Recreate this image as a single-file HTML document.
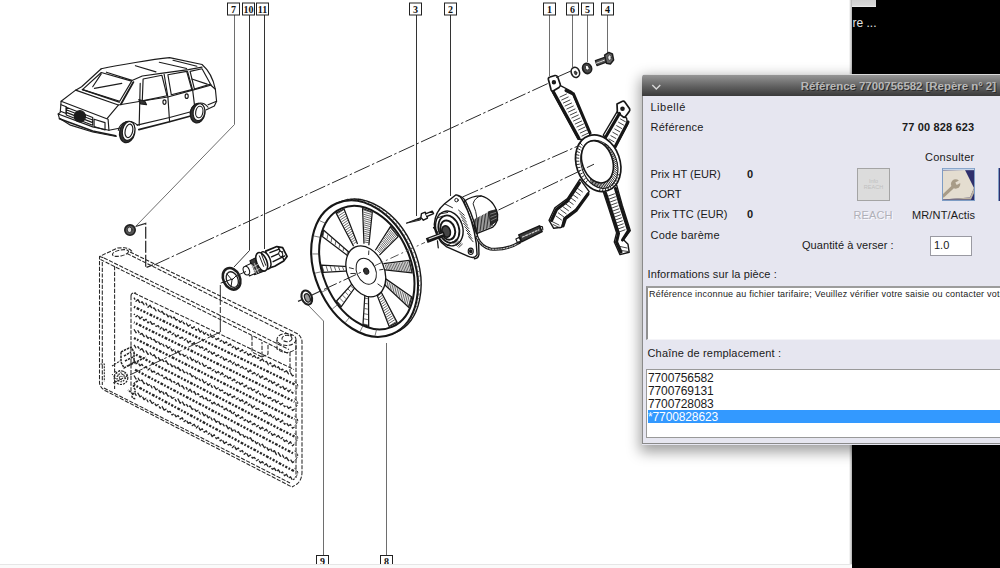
<!DOCTYPE html>
<html lang="fr">
<head>
<meta charset="utf-8">
<title>Référence 7700756582</title>
<style>
html,body{margin:0;padding:0;background:#fff;}
body{width:1000px;height:568px;position:relative;overflow:hidden;font-family:"Liberation Sans",sans-serif;font-size:11px;color:#1a1a1a;}
#draw{position:absolute;left:0;top:0;width:1000px;height:568px;}
#black{position:absolute;left:852px;top:0;width:148px;height:568px;background:#000;}
#black .tab{position:absolute;left:0;top:0;width:23.5px;height:7px;background:linear-gradient(#cfcfcf 0,#d6d6d6 75%,#f0f0f0 100%);}
#edge{position:absolute;left:849px;top:0;width:3px;height:568px;background:linear-gradient(to right,#fff,#b0b0b0);}
#black .re{position:absolute;left:0.5px;top:16px;color:#e4e4e4;font-size:12px;line-height:14px;}
#bottom{position:absolute;left:0;top:564px;width:852px;height:4px;background:#fafafa;border-top:1px solid #e6e6e6;box-sizing:border-box;}
#dlg{position:absolute;left:642px;top:74px;width:370px;height:370.5px;background:#e6e6f0;border-radius:4px 0 0 0;box-shadow:0 5px 14px 2px rgba(0,0,0,0.38);}
#dlg .bd{position:absolute;left:0;top:22px;width:1px;height:348px;background:#8a8a8a;}
#dlg .bb{position:absolute;left:0;top:369px;width:370px;height:1px;background:#8a8a8a;}
#tb{position:absolute;left:0;top:0;width:370px;height:22px;border-radius:4px 0 0 0;background:linear-gradient(#dcdcdc 0,#d4d4d4 1.4px,#939393 1.5px,#626262 55%,#3a3a3a 100%);}
#tb .t{position:absolute;right:16px;top:6px;font-weight:bold;font-size:11.5px;line-height:13px;color:#b8b8b8;text-shadow:1px 1px 0 #2c2c2c;white-space:nowrap;letter-spacing:-0.05px;}
.l{position:absolute;white-space:nowrap;line-height:13px;}
.b{font-weight:bold;}
.box{position:absolute;background:#fff;box-sizing:border-box;}
</style>
</head>
<body>
<svg id="draw" width="1000" height="568" viewBox="0 0 1000 568">
<g id="leaders" fill="none" stroke="#333" stroke-width="1">
<path d="M234.5 15 V124.5 L136 226" stroke="#6e6e6e"/>
<path d="M249.5 15 V250.5 L234 267"/>
<path d="M264.5 15 V249"/>
<path d="M416.5 15 V216"/>
<path d="M450.5 15 V196"/>
<path d="M549.5 15 V76" stroke="#6e6e6e"/>
<path d="M572.5 15 V67" stroke="#6e6e6e"/>
<path d="M587.5 15 V62" stroke="#6e6e6e"/>
<path d="M607.5 15 V53" stroke="#6e6e6e"/>
<path d="M308 305 L323.5 321 V556" stroke="#6e6e6e"/>
<path d="M386.5 343 V556" stroke="#6e6e6e"/>
</g>
<g id="boxes">
<rect x="227.5" y="3" width="12" height="12" fill="#fff" stroke="#222" stroke-width="1"/>
<text x="233.5" y="12.8" text-anchor="middle" font-family="Liberation Serif,serif" font-weight="bold" font-size="10" fill="#111" stroke="none">7</text>
<rect x="242.5" y="3" width="12" height="12" fill="#fff" stroke="#222" stroke-width="1"/>
<text x="248.5" y="12.8" text-anchor="middle" font-family="Liberation Serif,serif" font-weight="bold" font-size="10" fill="#111" stroke="none">10</text>
<rect x="256.5" y="3" width="12" height="12" fill="#fff" stroke="#222" stroke-width="1"/>
<text x="262.5" y="12.8" text-anchor="middle" font-family="Liberation Serif,serif" font-weight="bold" font-size="10" fill="#111" stroke="none">11</text>
<rect x="409.5" y="3" width="12" height="12" fill="#fff" stroke="#222" stroke-width="1"/>
<text x="415.5" y="12.8" text-anchor="middle" font-family="Liberation Serif,serif" font-weight="bold" font-size="10" fill="#111" stroke="none">3</text>
<rect x="444.5" y="3" width="12" height="12" fill="#fff" stroke="#222" stroke-width="1"/>
<text x="450.5" y="12.8" text-anchor="middle" font-family="Liberation Serif,serif" font-weight="bold" font-size="10" fill="#111" stroke="none">2</text>
<rect x="543.5" y="3" width="12" height="12" fill="#fff" stroke="#222" stroke-width="1"/>
<text x="549.5" y="12.8" text-anchor="middle" font-family="Liberation Serif,serif" font-weight="bold" font-size="10" fill="#111" stroke="none">1</text>
<rect x="566.5" y="3" width="12" height="12" fill="#fff" stroke="#222" stroke-width="1"/>
<text x="572.5" y="12.8" text-anchor="middle" font-family="Liberation Serif,serif" font-weight="bold" font-size="10" fill="#111" stroke="none">6</text>
<rect x="581.5" y="3" width="12" height="12" fill="#fff" stroke="#222" stroke-width="1"/>
<text x="587.5" y="12.8" text-anchor="middle" font-family="Liberation Serif,serif" font-weight="bold" font-size="10" fill="#111" stroke="none">5</text>
<rect x="601.5" y="3" width="12" height="12" fill="#fff" stroke="#222" stroke-width="1"/>
<text x="607.5" y="12.8" text-anchor="middle" font-family="Liberation Serif,serif" font-weight="bold" font-size="10" fill="#111" stroke="none">4</text>
<rect x="316.5" y="555.5" width="12" height="12" fill="#fff" stroke="#222" stroke-width="1"/>
<text x="322.5" y="565.3" text-anchor="middle" font-family="Liberation Serif,serif" font-weight="bold" font-size="10" fill="#111" stroke="none">9</text>
<rect x="380.5" y="555.5" width="12" height="12" fill="#fff" stroke="#222" stroke-width="1"/>
<text x="386.5" y="565.3" text-anchor="middle" font-family="Liberation Serif,serif" font-weight="bold" font-size="10" fill="#111" stroke="none">8</text>
</g>
<g id="car" transform="translate(50 50) scale(0.17085)" fill="none" stroke="#1c1c1c" stroke-width="6.8" stroke-linecap="round" stroke-linejoin="round">
<path d="M300 110 C400 88 600 55 700 45 L890 85 C930 120 955 165 968 230 L975 300 L962 328 L915 350"/>
<path d="M300 110 L185 215 L150 235 L65 300 L60 365 L48 375 L55 400 L120 440 L250 480 L388 506"/>
<path d="M330 130 L480 178 L540 152 L660 135 L810 115 L890 100"/>
<path d="M300 132 L478 182 L408 300 L190 232 Z"/>
<path d="M150 235 L400 322 L530 300 L690 275 L835 235 L945 205"/>
<path d="M400 322 L335 400"/>
<path d="M65 300 L340 405 L345 470"/>
<path d="M48 375 L250 450 L345 470 L420 455"/>
<path d="M95 335 L250 395 M95 350 L250 410 M95 365 L250 425 M95 380 L250 440 M95 335 V380 M250 395 V440"/>
<path d="M258 405 L322 425 L322 468 L258 448 Z"/>
<path d="M65 320 L95 332 L95 372 L65 360"/>
<path d="M400 470 C410 420 470 400 512 440"/>
<path d="M510 440 L700 395 L830 360"/>
<path d="M820 370 C830 310 890 290 925 335"/>
<path d="M528 195 L522 440"/>
<path d="M668 142 L690 275 L700 420"/>
<path d="M805 125 L835 235 L848 340"/>
<path d="M545 170 L655 148 L685 268 L540 298 Z"/>
<path d="M690 145 L800 125 L830 232 L710 262 Z"/>
<path d="M820 125 L890 110 L940 200 L845 228 Z"/>
<path d="M968 230 L940 205 M975 300 L925 320"/>
<path d="M500 92 L620 128 M640 72 L800 108 M720 60 L860 95"/>
<path d="M260 225 L420 195 M250 215 L300 140"/>
<path d="M830 170 L920 200"/>
<path d="M488 188 L415 318" stroke-width="11"/>
<path d="M520 466 L700 420 L818 388" stroke-width="10"/>
<path d="M55 402 L250 474 L385 502" stroke-width="9"/>
<path d="M190 232 L405 305" stroke-width="9"/>
<path d="M520 290 L555 300 L565 320 L530 315 Z" fill="#333"/>
<ellipse cx="670" cy="305" rx="9" ry="13"/><ellipse cx="800" cy="270" rx="9" ry="13"/>
<circle cx="175" cy="388" r="33" fill="#1a1a1a"/>
<ellipse cx="452" cy="480" rx="44" ry="63" transform="rotate(12 452 480)" stroke-width="8" fill="#333"/>
<ellipse cx="460" cy="474" rx="36" ry="56" transform="rotate(12 460 474)" fill="#fff"/>
<ellipse cx="462" cy="473" rx="22" ry="40" transform="rotate(12 462 473)"/>
<ellipse cx="864" cy="370" rx="42" ry="57" transform="rotate(10 864 370)" stroke-width="8" fill="#333"/>
<ellipse cx="872" cy="364" rx="34" ry="50" transform="rotate(10 872 364)" fill="#fff"/>
<ellipse cx="874" cy="363" rx="21" ry="34" transform="rotate(10 874 363)"/>
</g>
<g id="radiator" fill="none" stroke="#262626" stroke-width="1.05" stroke-dasharray="4.2 1.5">
<path d="M130 252 L295 332.4 Q301 335 302 341 V472 Q302 480 297 484 L292 487"/>
<path d="M132 251.3 Q128 247.6 124 247.8 L117.5 248 L99.5 256.5 V383 Q100 388 106 391 L292 487"/>
<path d="M102.3 262 V385 M114.6 266 V389 M99.5 256.5 L104 258"/>
<path d="M104 258 L289 349.5"/>
<path d="M100.5 259.5 L289 354"/>
<path d="M127 253.5 L292 336"/>
<path d="M296 345 V478 M290 352 V372"/>
<path d="M131 296 V392 M134 293 L294 369.5"/>
<path d="M131 296 Q131 292 136 293"/>
<path d="M104 388 L290 483"/>
<path d="M252 336 V352 L262 357 V342 M262 357 L268 354 V344"/>
<ellipse cx="286.5" cy="339.5" rx="9.5" ry="6"/><ellipse cx="287" cy="338.5" rx="5" ry="3.2"/>
<path d="M277 340 V349 Q286 356 296 349 V340"/>
<ellipse cx="120.5" cy="253" rx="8.2" ry="3" transform="rotate(-12 120.5 253)"/>
<circle cx="121" cy="377.7" r="6.8" stroke-dasharray="2.2 1" stroke-width="1.2"/><circle cx="121" cy="377.7" r="4" stroke-dasharray="1.6 1" stroke-width="1.1"/><circle cx="121" cy="377.7" r="1.6" stroke-dasharray="1 0.8"/>
<path d="M112 374 L117 380 M115 371 L122 381 M119 370 L126 379 M123 371 L127 376" stroke-dasharray="1.5 1" stroke-width="0.9"/>
<path d="M121 352 L131 347 L134 352 L134 362 L124 368 L121 362 Z M124 356 L131 352 M125 361 L133 357 M128 366 L146 357" stroke-dasharray="2.4 0.9" stroke-width="1.5"/>
<path d="M138 381 Q132 383 134 388 Q137 391 133 394 Q130 398 136 399 M133 394 L128 390" stroke-dasharray="2.2 0.8" stroke-width="1.5"/>
<path d="M100.5 364 H104.3 V381.5 M112 366 L120 361" stroke-dasharray="2 1"/>
</g>
<g id="fins" fill="none" stroke="#262626" stroke-linejoin="round">
<path d="M134.0 297.6 L136.0 301.3 L138.0 299.6 L140.0 303.3 L142.0 301.7 L144.0 304.7 L146.0 303.2 L148.0 307.3 L150.1 305.3 L152.1 308.7 L154.1 307.8 L156.1 310.8 L158.1 309.6 L160.1 312.7 L162.1 311.3 L164.1 314.4 L166.1 313.3 L168.1 316.9 L170.1 315.1 L172.1 318.7 L174.1 317.1 L176.1 320.1 L178.1 319.1 L180.1 322.4 L182.2 320.7 L184.2 323.9 L186.2 323.0 L188.2 326.2 L190.2 324.8 L192.2 328.4 L194.2 326.7 L196.2 330.4 L198.2 328.4 L200.2 332.2 L202.2 330.4 L204.2 334.2 L206.2 332.6 L208.2 335.5 L210.2 334.0 L212.2 337.5 L214.2 336.5 L216.3 339.6 L218.3 338.2 L220.3 341.4 L222.3 340.0 L224.3 343.4 L226.3 341.8 L228.3 345.4 L230.3 343.9 L232.3 347.6 L234.3 345.9 L236.3 349.6 L238.3 348.0 L240.3 351.5 L242.3 349.7 L244.3 352.8 L246.3 351.8 L248.4 355.3 L250.4 353.7 L252.4 356.9 L254.4 355.5 L256.4 358.6 L258.4 357.5 L260.4 360.8 L262.4 359.0 L264.4 362.3 L266.4 361.4 L268.4 364.9 L270.4 362.7 L272.4 366.7 L274.4 364.9 L276.4 368.1 L278.4 366.7 L280.5 370.5 L282.5 369.1 L284.5 371.9 L286.5 370.8 L288.5 373.8 L290.5 372.8 L292.5 375.9 L294.5 374.8" stroke-width="1.3" stroke-dasharray="5.5 1.4 3.2 1.3 7 1.5" stroke-dashoffset="7.8"/>
<path d="M134 306.8 L294.5 384.4" stroke-width="2.3" stroke-dasharray="2.2 1.5 1.7 1.6 2.8 1.4 1.6 1.6" stroke-dashoffset="4.0"/>
<path d="M294.5 381.4 q6.5 4 0 9.5" stroke-width="1" stroke-dasharray="2.6 1.2"/>
<path d="M134.0 313.8 L136.0 316.7 L138.0 315.0 L140.0 318.9 L142.0 317.0 L144.0 320.6 L146.0 319.2 L148.0 322.9 L150.1 321.0 L152.1 324.4 L154.1 323.5 L156.1 326.5 L158.1 325.5 L160.1 329.0 L162.1 327.0 L164.1 330.6 L166.1 329.1 L168.1 332.7 L170.1 331.1 L172.1 334.6 L174.1 333.1 L176.1 336.9 L178.1 335.0 L180.1 338.4 L182.2 337.1 L184.2 340.2 L186.2 338.8 L188.2 342.8 L190.2 340.9 L192.2 344.4 L194.2 342.5 L196.2 346.3 L198.2 344.9 L200.2 347.9 L202.2 346.9 L204.2 350.4 L206.2 348.4 L208.2 352.3 L210.2 350.7 L212.2 354.3 L214.2 352.5 L216.3 356.3 L218.3 354.8 L220.3 357.7 L222.3 356.2 L224.3 360.2 L226.3 358.9 L228.3 361.8 L230.3 360.5 L232.3 364.1 L234.3 362.3 L236.3 365.8 L238.3 364.3 L240.3 367.8 L242.3 366.5 L244.3 369.7 L246.3 368.3 L248.4 372.1 L250.4 369.9 L252.4 373.9 L254.4 372.5 L256.4 375.6 L258.4 374.0 L260.4 378.0 L262.4 376.0 L264.4 379.4 L266.4 378.1 L268.4 381.8 L270.4 379.8 L272.4 383.5 L274.4 382.0 L276.4 385.8 L278.4 384.0 L280.5 387.8 L282.5 385.8 L284.5 389.4 L286.5 388.1 L288.5 391.8 L290.5 389.9 L292.5 393.2 L294.5 391.6" stroke-width="1.3" stroke-dasharray="5.5 1.4 3.2 1.3 7 1.5" stroke-dashoffset="4.2"/>
<path d="M134 322.4 L294.5 401.8" stroke-width="2.3" stroke-dasharray="2.2 1.5 1.7 1.6 2.8 1.4 1.6 1.6" stroke-dashoffset="1.5"/>
<path d="M294.5 398.8 q6.5 4 0 9.5" stroke-width="1" stroke-dasharray="2.6 1.2"/>
<path d="M134.0 329.2 L136.0 332.8 L138.0 330.8 L140.0 334.3 L142.0 333.3 L144.0 336.6 L146.0 335.3 L148.0 338.4 L150.1 336.7 L152.1 340.4 L154.1 339.3 L156.1 342.4 L158.1 340.9 L160.1 344.5 L162.1 343.0 L164.1 346.5 L166.1 345.4 L168.1 348.3 L170.1 346.7 L172.1 350.9 L174.1 349.4 L176.1 353.0 L178.1 351.0 L180.1 354.9 L182.2 353.4 L184.2 356.4 L186.2 355.3 L188.2 358.9 L190.2 357.2 L192.2 360.6 L194.2 358.9 L196.2 362.5 L198.2 360.9 L200.2 364.3 L202.2 363.2 L204.2 366.5 L206.2 365.4 L208.2 368.3 L210.2 367.5 L212.2 370.8 L214.2 369.5 L216.3 373.0 L218.3 371.5 L220.3 374.7 L222.3 372.8 L224.3 376.9 L226.3 374.9 L228.3 378.5 L230.3 377.3 L232.3 380.7 L234.3 379.1 L236.3 383.0 L238.3 381.3 L240.3 384.6 L242.3 383.0 L244.3 387.0 L246.3 385.2 L248.4 388.9 L250.4 387.1 L252.4 390.5 L254.4 389.3 L256.4 393.0 L258.4 391.0 L260.4 395.0 L262.4 393.6 L264.4 397.0 L266.4 395.5 L268.4 398.4 L270.4 397.4 L272.4 401.1 L274.4 398.9 L276.4 402.6 L278.4 401.1 L280.5 404.8 L282.5 403.2 L284.5 406.8 L286.5 405.5 L288.5 408.4 L290.5 406.9 L292.5 410.5 L294.5 409.0" stroke-width="1.3" stroke-dasharray="5.5 1.4 3.2 1.3 7 1.5" stroke-dashoffset="0.5"/>
<path d="M134 338.0 L294.5 419.2" stroke-width="2.3" stroke-dasharray="2.2 1.5 1.7 1.6 2.8 1.4 1.6 1.6" stroke-dashoffset="7.8"/>
<path d="M294.5 416.2 q6.5 4 0 9.5" stroke-width="1" stroke-dasharray="2.6 1.2"/>
<path d="M134.0 344.9 L136.0 347.8 L138.0 346.7 L140.0 350.0 L142.0 348.6 L144.0 352.1 L146.0 350.9 L148.0 354.4 L150.1 352.7 L152.1 356.1 L154.1 354.7 L156.1 358.1 L158.1 357.0 L160.1 360.6 L162.1 358.9 L164.1 362.2 L166.1 360.8 L168.1 364.4 L170.1 363.2 L172.1 366.8 L174.1 365.0 L176.1 368.9 L178.1 367.3 L180.1 370.6 L182.2 369.1 L184.2 372.8 L186.2 371.4 L188.2 374.7 L190.2 373.5 L192.2 376.8 L194.2 375.2 L196.2 378.9 L198.2 377.6 L200.2 380.6 L202.2 379.4 L204.2 383.0 L206.2 381.8 L208.2 385.4 L210.2 383.5 L212.2 387.4 L214.2 385.9 L216.3 389.0 L218.3 387.7 L220.3 390.9 L222.3 390.0 L224.3 393.4 L226.3 392.1 L228.3 395.6 L230.3 394.0 L232.3 397.6 L234.3 396.0 L236.3 399.1 L238.3 398.0 L240.3 401.1 L242.3 399.7 L244.3 403.8 L246.3 401.7 L248.4 405.3 L250.4 403.8 L252.4 407.9 L254.4 405.9 L256.4 409.3 L258.4 408.5 L260.4 411.4 L262.4 410.6 L264.4 413.9 L266.4 412.6 L268.4 416.2 L270.4 414.4 L272.4 418.1 L274.4 416.1 L276.4 420.2 L278.4 418.5 L280.5 422.2 L282.5 420.2 L284.5 424.3 L286.5 422.9 L288.5 425.8 L290.5 424.5 L292.5 428.2 L294.5 427.0" stroke-width="1.3" stroke-dasharray="5.5 1.4 3.2 1.3 7 1.5" stroke-dashoffset="1.9"/>
<path d="M134 353.6 L294.5 436.6" stroke-width="2.3" stroke-dasharray="2.2 1.5 1.7 1.6 2.8 1.4 1.6 1.6" stroke-dashoffset="1.4"/>
<path d="M294.5 433.6 q6.5 4 0 9.5" stroke-width="1" stroke-dasharray="2.6 1.2"/>
<path d="M134.0 360.0 L136.0 363.8 L138.0 362.5 L140.0 365.8 L142.0 364.3 L144.0 367.9 L146.0 366.4 L148.0 370.0 L150.1 368.3 L152.1 372.1 L154.1 371.1 L156.1 374.2 L158.1 373.0 L160.1 376.1 L162.1 375.0 L164.1 378.6 L166.1 377.1 L168.1 380.5 L170.1 379.1 L172.1 382.7 L174.1 381.5 L176.1 384.4 L178.1 382.9 L180.1 387.0 L182.2 385.7 L184.2 388.9 L186.2 387.4 L188.2 391.2 L190.2 389.3 L192.2 392.9 L194.2 391.4 L196.2 395.3 L198.2 393.6 L200.2 397.1 L202.2 396.0 L204.2 399.8 L206.2 397.8 L208.2 401.7 L210.2 400.0 L212.2 403.9 L214.2 402.2 L216.3 405.5 L218.3 404.0 L220.3 407.4 L222.3 406.3 L224.3 409.8 L226.3 408.2 L228.3 411.9 L230.3 410.4 L232.3 414.3 L234.3 412.3 L236.3 416.6 L238.3 414.7 L240.3 418.4 L242.3 416.8 L244.3 420.6 L246.3 419.2 L248.4 422.5 L250.4 421.0 L252.4 424.7 L254.4 423.4 L256.4 426.6 L258.4 425.4 L260.4 429.1 L262.4 427.3 L264.4 430.6 L266.4 429.2 L268.4 433.1 L270.4 431.6 L272.4 435.4 L274.4 433.9 L276.4 436.9 L278.4 435.5 L280.5 439.1 L282.5 437.5 L284.5 441.5 L286.5 440.2 L288.5 443.8 L290.5 441.8 L292.5 445.8 L294.5 443.9" stroke-width="1.3" stroke-dasharray="5.5 1.4 3.2 1.3 7 1.5" stroke-dashoffset="3.4"/>
<path d="M134 369.2 L294.5 454.0" stroke-width="2.3" stroke-dasharray="2.2 1.5 1.7 1.6 2.8 1.4 1.6 1.6" stroke-dashoffset="5.8"/>
<path d="M294.5 451.0 q6.5 4 0 9.5" stroke-width="1" stroke-dasharray="2.6 1.2"/>
<path d="M134.0 375.5 L136.0 379.0 L138.0 378.2 L140.0 381.3 L142.0 380.0 L144.0 383.7 L146.0 382.4 L148.0 385.4 L150.1 384.2 L152.1 387.9 L154.1 386.5 L156.1 389.8 L158.1 388.7 L160.1 392.6 L162.1 390.7 L164.1 394.4 L166.1 392.6 L168.1 396.3 L170.1 395.2 L172.1 398.3 L174.1 397.5 L176.1 401.1 L178.1 399.0 L180.1 403.3 L182.2 401.4 L184.2 405.3 L186.2 403.9 L188.2 407.1 L190.2 405.9 L192.2 409.5 L194.2 408.2 L196.2 411.3 L198.2 410.3 L200.2 414.0 L202.2 412.4 L204.2 415.8 L206.2 414.0 L208.2 417.9 L210.2 416.4 L212.2 420.2 L214.2 418.8 L216.3 422.3 L218.3 420.5 L220.3 424.5 L222.3 423.0 L224.3 426.2 L226.3 425.4 L228.3 428.8 L230.3 426.9 L232.3 431.1 L234.3 429.1 L236.3 432.8 L238.3 431.7 L240.3 435.1 L242.3 433.7 L244.3 437.3 L246.3 435.7 L248.4 439.2 L250.4 437.7 L252.4 441.1 L254.4 440.2 L256.4 443.8 L258.4 442.2 L260.4 446.0 L262.4 444.2 L264.4 447.7 L266.4 446.4 L268.4 450.4 L270.4 448.3 L272.4 452.2 L274.4 450.6 L276.4 454.6 L278.4 452.8 L280.5 456.3 L282.5 455.0 L284.5 458.7 L286.5 457.4 L288.5 460.6 L290.5 459.6 L292.5 462.6 L294.5 461.3" stroke-width="1.3" stroke-dasharray="5.5 1.4 3.2 1.3 7 1.5" stroke-dashoffset="0.8"/>
<path d="M134 384.8 L294.5 471.4" stroke-width="2.3" stroke-dasharray="2.2 1.5 1.7 1.6 2.8 1.4 1.6 1.6" stroke-dashoffset="0.9"/>
<path d="M294.5 468.4 q6.5 4 0 9.5" stroke-width="1" stroke-dasharray="2.6 1.2"/>
<path d="M134.0 391.6 L136.0 395.2 L138.0 393.3 L140.0 396.9 L142.0 395.7 L144.0 399.6 L146.0 398.2 L148.0 401.8 L150.1 400.2 L152.1 403.5 L154.1 402.3 L156.1 405.7 L158.1 404.5 L160.1 408.2 L162.1 406.5 L164.1 410.1 L166.1 409.1 L168.1 412.1 L170.1 411.3 L172.1 415.0 L174.1 413.6 L176.1 416.8 L178.1 415.5 L180.1 419.1 L182.2 417.7 L184.2 421.6 L186.2 420.0 L188.2 423.3 L190.2 422.3 L192.2 425.6 L194.2 424.3 L196.2 428.0 L198.2 426.0 L200.2 430.2 L202.2 428.7 L204.2 432.2 L206.2 430.8 L208.2 434.3 L210.2 432.7 L212.2 436.6 L214.2 434.8 L216.3 438.7 L218.3 437.4 L220.3 440.9 L222.3 439.6 L224.3 443.5 L226.3 442.0 L228.3 445.0 L230.3 444.1 L232.3 447.6 L234.3 445.7 L236.3 449.6 L238.3 448.0 L240.3 451.5 L242.3 450.5 L244.3 454.4 L246.3 452.5 L248.4 456.5 L250.4 455.0 L252.4 458.1 L254.4 457.3 L256.4 460.7 L258.4 459.5 L260.4 463.0 L262.4 461.6 L264.4 464.8 L266.4 463.8 L268.4 467.5 L270.4 466.0 L272.4 469.3 L274.4 468.1 L276.4 471.5 L278.4 469.8 L280.5 473.4 L282.5 472.0 L284.5 475.7 L286.5 474.2 L288.5 478.1 L290.5 476.8 L292.5 480.3 L294.5 478.8" stroke-width="1.3" stroke-dasharray="5.5 1.4 3.2 1.3 7 1.5" stroke-dashoffset="5.2"/>
</g>
<g id="fan" transform="translate(364.6 268.6) rotate(-23)" fill="none" stroke="#161616" stroke-width="1" stroke-linejoin="round">
<ellipse cx="3.4" cy="0" rx="49.5" ry="71" stroke-width="1.4" fill="#fff"/>
<ellipse cx="0" cy="0" rx="49.5" ry="71" stroke-width="2.1" fill="#fff"/>
<ellipse cx="2.4" cy="0" rx="43.9" ry="64.4" stroke-width="2"/>
<path d="M8.6 -69.9 L11.8 -70.7 M12.0 -68.9 L15.2 -69.7 M15.3 -67.5 L18.5 -68.3 M18.5 -65.8 L21.7 -66.6 M21.7 -63.8 L24.9 -64.6 M24.8 -61.5 L28.0 -62.3 M27.7 -58.9 L30.9 -59.7 M30.5 -55.9 L33.7 -56.7 M33.1 -52.8 L36.3 -53.6 M35.6 -49.3 L38.8 -50.1 M37.9 -45.6 L41.1 -46.4 M40.0 -41.7 L43.2 -42.5 M42.0 -37.6 L45.2 -38.4 M43.7 -33.3 L46.9 -34.1 M45.2 -28.9 L48.4 -29.7 M46.5 -24.3 L49.7 -25.1 M47.6 -19.6 L50.8 -20.4 M48.4 -14.8 L51.6 -15.6 M49.0 -9.9 L52.2 -10.7 M49.4 -5.0 L52.6 -5.8 M49.5 0.0 L52.7 -0.8 M49.4 5.0 L52.6 4.2 M49.0 9.9 L52.2 9.1 M48.4 14.8 L51.6 14.0 M47.6 19.6 L50.8 18.8 M46.5 24.3 L49.7 23.5 M45.2 28.9 L48.4 28.1 M43.7 33.3 L46.9 32.5 M42.0 37.6 L45.2 36.8 M40.0 41.7 L43.2 40.9 M37.9 45.6 L41.1 44.8 M35.6 49.3 L38.8 48.5 M33.1 52.8 L36.3 52.0 M30.5 55.9 L33.7 55.1 M27.7 58.9 L30.9 58.1 M24.8 61.5 L28.0 60.7 M21.7 63.8 L24.9 63.0 M18.5 65.8 L21.7 65.0 M15.3 67.5 L18.5 66.7 M12.0 68.9 L15.2 68.1 M-16.6 65.8 L-12.6 60.5 M-28.8 56.3 L-23.7 51.8 M-38.7 42.1 L-32.7 38.8 M-45.4 24.5 L-38.7 22.6 M-48.4 4.9 L-41.4 4.5 M-47.4 -15.2 L-40.5 -13.9 M-42.4 -33.9 L-36.0 -31.2 M-34.0 -49.9 L-28.4 -45.9 M-22.8 -61.8 L-18.2 -56.9" stroke-width="0.6" stroke="#3a3a3a"/>
<path d="M19.3 2.7 L44.3 9.8 L42.0 22.6 L18.3 9.1" stroke-width="1.25"/>
<path d="M20.5 4.2 L20.0 9.8 M22.0 4.6 L21.5 10.6 M23.6 5.0 L23.0 11.4 M25.1 5.4 L24.4 12.3 M26.6 5.8 L25.9 13.1 M28.2 6.2 L27.3 13.9 M29.7 6.6 L28.8 14.7 M31.2 7.1 L30.2 15.5 M32.7 7.5 L31.7 16.3 M34.3 7.9 L33.1 17.1 M35.8 8.4 L34.6 17.9 M37.3 8.8 L36.0 18.7 M38.8 9.3 L37.5 19.5 M40.3 9.7 L38.9 20.3 M41.9 10.2 L40.4 21.1 M43.4 10.6 L41.8 21.9" stroke-width="0.7" stroke="#3c3c3c"/>
<path d="M15.0 17.0 L32.4 44.5 L25.4 52.8 L11.6 21.3" stroke-width="1.25"/>
<path d="M15.3 19.3 L12.7 23.4 M16.4 20.9 L13.6 25.4 M17.5 22.6 L14.4 27.3 M18.6 24.2 L15.3 29.2 M19.6 25.9 L16.1 31.1 M20.7 27.5 L17.0 33.0 M21.8 29.2 L17.9 34.9 M22.9 30.9 L18.7 36.8 M23.9 32.5 L19.6 38.7 M25.0 34.2 L20.4 40.6 M26.0 35.9 L21.3 42.5 M27.1 37.6 L22.1 44.4 M28.1 39.3 L23.0 46.4 M29.2 40.9 L23.8 48.3 M30.2 42.6 L24.7 50.2 M31.3 44.3 L25.6 52.1" stroke-width="0.7" stroke="#3c3c3c"/>
<path d="M5.8 24.9 L8.9 62.2 L-0.0 62.9 L1.3 25.4" stroke-width="1.25"/>
<path d="M5.1 27.0 L1.4 28.1 M5.4 29.3 L1.3 30.4 M5.6 31.5 L1.2 32.7 M5.8 33.8 L1.2 34.9 M6.0 36.1 L1.1 37.2 M6.2 38.3 L1.0 39.5 M6.4 40.6 L1.0 41.8 M6.6 42.9 L0.9 44.1 M6.8 45.2 L0.8 46.4 M7.0 47.4 L0.8 48.7 M7.2 49.7 L0.7 51.0 M7.4 52.0 L0.6 53.2 M7.5 54.3 L0.6 55.5 M7.7 56.5 L0.5 57.8 M7.9 58.8 L0.4 60.1 M8.1 61.1 L0.4 62.4" stroke-width="0.7" stroke="#3c3c3c"/>
<path d="M-5.5 22.8 L-18.8 54.8 L-23.2 50.6 L-8.1 20.5" stroke-width="1.25"/>
<path d="M-6.9 23.8 L-9.0 22.7 M-8.8 28.8 L-11.3 27.4 M-10.8 33.7 L-13.6 32.0 M-12.8 38.6 L-15.8 36.6 M-14.9 43.5 L-18.1 41.3 M-16.9 48.3 L-20.4 45.9 M-19.0 53.2 L-22.7 50.5" stroke-width="0.7" stroke="#3c3c3c"/>
<path d="M-13.1 11.7 L-36.6 26.1 L-38.5 18.9 L-14.2 7.6" stroke-width="1.25"/>
<path d="M-14.6 11.4 L-15.9 8.7 M-18.2 13.7 L-19.6 10.5 M-21.8 16.0 L-23.3 12.2 M-25.3 18.2 L-27.0 14.0 M-28.9 20.4 L-30.7 15.8 M-32.5 22.5 L-34.4 17.5 M-36.1 24.7 L-38.1 19.3" stroke-width="0.7" stroke="#3c3c3c"/>
<path d="M-14.9 -3.8 L-39.6 -12.6 L-38.3 -20.0 L-14.1 -8.1" stroke-width="1.25"/>
<path d="M-16.0 -5.4 L-15.9 -8.7 M-19.8 -6.6 L-19.6 -10.5 M-23.5 -7.9 L-23.3 -12.2 M-27.3 -9.2 L-27.0 -14.0 M-31.1 -10.5 L-30.7 -15.8 M-34.9 -11.9 L-34.4 -17.5 M-38.6 -13.3 L-38.1 -19.3" stroke-width="0.7" stroke="#3c3c3c"/>
<path d="M-10.1 -17.8 L-26.6 -46.4 L-22.6 -51.3 L-7.8 -20.7" stroke-width="1.25"/>
<path d="M-10.4 -20.1 L-9.0 -22.7 M-12.9 -24.4 L-11.3 -27.4 M-15.5 -28.7 L-13.6 -32.0 M-18.0 -33.0 L-15.8 -36.6 M-20.5 -37.4 L-18.1 -41.3 M-23.1 -41.8 L-20.4 -45.9 M-25.5 -46.2 L-22.7 -50.5" stroke-width="0.7" stroke="#3c3c3c"/>
<path d="M-1.4 -24.9 L-4.5 -62.2 L4.4 -62.9 L3.1 -25.4" stroke-width="1.25"/>
<path d="M-0.7 -27.0 L3.0 -28.1 M-1.0 -29.3 L3.1 -30.4 M-1.2 -31.5 L3.2 -32.7 M-1.4 -33.8 L3.2 -34.9 M-1.6 -36.1 L3.3 -37.2 M-1.8 -38.3 L3.4 -39.5 M-2.0 -40.6 L3.4 -41.8 M-2.2 -42.9 L3.5 -44.1 M-2.4 -45.2 L3.6 -46.4 M-2.6 -47.4 L3.6 -48.7 M-2.8 -49.7 L3.7 -51.0 M-3.0 -52.0 L3.8 -53.2 M-3.1 -54.3 L3.8 -55.5 M-3.3 -56.5 L3.9 -57.8 M-3.5 -58.8 L4.0 -60.1 M-3.7 -61.1 L4.0 -62.4" stroke-width="0.7" stroke="#3c3c3c"/>
<path d="M9.2 -23.2 L21.6 -56.1 L29.1 -48.9 L13.0 -19.8" stroke-width="1.25"/>
<path d="M10.6 -24.4 L14.1 -22.0 M11.3 -26.4 L15.0 -23.8 M12.0 -28.4 L16.0 -25.6 M12.8 -30.5 L17.0 -27.4 M13.5 -32.5 L17.9 -29.2 M14.2 -34.5 L18.9 -31.0 M15.0 -36.5 L19.9 -32.8 M15.7 -38.5 L20.8 -34.5 M16.5 -40.5 L21.8 -36.3 M17.2 -42.5 L22.8 -38.1 M18.0 -44.5 L23.7 -39.9 M18.7 -46.5 L24.7 -41.7 M19.5 -48.5 L25.6 -43.5 M20.2 -50.5 L26.6 -45.3 M21.0 -52.5 L27.6 -47.1 M21.8 -54.5 L28.5 -48.9" stroke-width="0.7" stroke="#3c3c3c"/>
<path d="M17.1 -12.7 L40.2 -28.6 L43.4 -16.3 L18.9 -6.6" stroke-width="1.25"/>
<path d="M18.7 -12.5 L20.6 -7.5 M20.1 -13.5 L22.1 -8.1 M21.5 -14.5 L23.5 -8.7 M22.9 -15.5 L25.0 -9.3 M24.3 -16.5 L26.5 -10.0 M25.7 -17.5 L28.0 -10.6 M27.1 -18.5 L29.5 -11.2 M28.5 -19.4 L31.0 -11.8 M29.9 -20.4 L32.5 -12.4 M31.3 -21.4 L34.0 -13.0 M32.7 -22.4 L35.5 -13.6 M34.1 -23.3 L37.0 -14.2 M35.5 -24.3 L38.5 -14.9 M36.9 -25.2 L40.0 -15.5 M38.3 -26.2 L41.5 -16.1 M39.8 -27.1 L43.0 -16.7" stroke-width="0.7" stroke="#3c3c3c"/>
<ellipse cx="0" cy="3" rx="18.5" ry="26.5" fill="#fff" stroke-width="1.3"/>
<ellipse cx="0.5" cy="3" rx="9.5" ry="13.5" stroke-width="1"/>
<ellipse cx="0.5" cy="3" rx="2.4" ry="3.2" fill="#333"/>
<path d="M6 19 l3 5 M9 -11 l2 -4 M13 7 l4 1 M-14 -7 l4 3 M-15 -1 l5 2" stroke-width="0.8"/>
</g>
<g id="motor" transform="translate(405 180) scale(0.15840)" fill="none" stroke="#161616" stroke-width="8" stroke-linecap="round" stroke-linejoin="round">
<path d="M372 135 Q420 100 480 100 Q560 120 585 215 Q588 270 555 297 L452 338 Z" fill="#fff"/>
<path d="M480 100 Q440 110 430 150 Q470 250 452 338" stroke-width="6"/>
<path d="M436 250 L442 336" stroke-width="5.5"/>
<path d="M445 246 L451 332" stroke-width="5.5"/>
<path d="M454 241 L460 328" stroke-width="5.5"/>
<path d="M463 236 L469 325" stroke-width="5.5"/>
<path d="M472 232 L478 321" stroke-width="5.5"/>
<path d="M481 228 L487 317" stroke-width="5.5"/>
<path d="M490 223 L496 313" stroke-width="5.5"/>
<path d="M499 218 L505 309" stroke-width="5.5"/>
<path d="M508 214 L514 306" stroke-width="5.5"/>
<path d="M517 210 L523 302" stroke-width="5.5"/>
<path d="M526 205 L532 298" stroke-width="5.5"/>
<path d="M535 200 L541 294" stroke-width="5.5"/>
<path d="M544 196 L550 290" stroke-width="5.5"/>
<path d="M528 200 L578 186 L586 255 L545 284 Z" fill="#2a2a2a" stroke-width="5"/>
<path d="M540 215 L572 205 M542 235 L576 222 M546 255 L578 240" stroke="#aaa" stroke-width="4"/>
<path d="M320 95 L250 150 Q190 200 185 280 Q190 370 260 420 L400 482 Q440 500 455 470 L450 400 Q430 250 365 130 Q345 90 320 95 Z" fill="#fff" stroke-width="9"/>
<path d="M335 100 Q365 100 385 140 Q450 270 465 400 L467 470 Q462 497 438 497" stroke-width="9"/>
<circle cx="325" cy="127" r="11" stroke-width="6"/>
<ellipse cx="415" cy="450" rx="16" ry="20" stroke-width="7"/><ellipse cx="415" cy="450" rx="7" ry="9" fill="#222"/>
<path d="M250 150 L300 175 M215 215 L270 205 M262 418 L300 390 M205 240 L235 228" stroke-width="6"/>
<ellipse cx="280" cy="306" rx="84" ry="112" transform="rotate(-18 280 306)" stroke-width="9"/>
<ellipse cx="277" cy="310" rx="64" ry="88" transform="rotate(-18 277 310)" stroke-width="11"/>
<ellipse cx="270" cy="316" rx="45" ry="62" transform="rotate(-18 270 316)" stroke-width="12" fill="#fff"/>
<ellipse cx="260" cy="325" rx="26" ry="37" transform="rotate(-18 260 325)" stroke-width="10" fill="#444"/>
<path d="M338 190 L374 222" stroke-width="5.5"/>
<path d="M346 211 L381 243" stroke-width="5.5"/>
<path d="M354 232 L388 264" stroke-width="5.5"/>
<path d="M362 253 L395 285" stroke-width="5.5"/>
<path d="M370 274 L402 306" stroke-width="5.5"/>
<path d="M378 295 L409 327" stroke-width="5.5"/>
<path d="M386 316 L416 348" stroke-width="5.5"/>
<path d="M394 337 L423 369" stroke-width="5.5"/>
<path d="M402 358 L430 390" stroke-width="5.5"/>
<path d="M300 395 L322 375" stroke-width="5"/>
<path d="M308 401 L330 381" stroke-width="5"/>
<path d="M316 407 L338 387" stroke-width="5"/>
<path d="M324 413 L346 393" stroke-width="5"/>
<path d="M332 419 L354 399" stroke-width="5"/>
<path d="M340 425 L362 405" stroke-width="5"/>
<path d="M137 383 L250 340" stroke-width="31" stroke="#161616" stroke-linecap="butt"/>
<path d="M150 373 L240 339" stroke-width="7" stroke="#ddd" stroke-linecap="butt"/>
<path d="M205 385 L210 428 M180 300 L205 330" stroke-width="8"/>
<path d="M455 362 Q480 420 540 436 Q640 445 722 395" stroke-width="19" stroke="#1c1c1c"/>
<path d="M455 362 Q480 420 540 436 Q640 445 722 395" stroke-width="6" stroke="#e8e8e8" stroke-dasharray="9 9"/>
<path d="M718 346 L848 290 L866 326 L736 390 Z" fill="#3a3a3a" stroke-width="9"/>
<path d="M742 360 L845 315" stroke="#ccc" stroke-width="8" stroke-dasharray="12 10"/>
<path d="M848 290 L868 296 L870 314 M700 372 L722 362 L732 392 L712 400 Z" stroke-width="7"/>
<path d="M10 272 L100 237 L98 250 Z" fill="#222" stroke-width="6"/>
<path d="M100 237 L104 212 L128 203 L142 240 L116 254 Z" fill="#fff" stroke-width="9"/>
<path d="M130 214 L172 197 L180 212 L140 230" fill="#fff" stroke-width="9"/>
</g>
<g id="bracket" fill="#fff" stroke="#161616" stroke-width="1.4" stroke-linejoin="round" stroke-linecap="round">
<path d="M551.6 90.7 L578 139.2 L590 140 L589.6 132.9 L571.7 91.5 L560 85.4 Z"/>
<path d="M548.4 79.5 Q548 77.5 550 77 L555 75.5 Q557 75.3 557.8 77.3 L560.3 84.5 Q560.6 86.5 559 87.5 L553.5 90.8 Q551.6 91.5 551 89.5 Z" stroke-width="1.7"/>
<circle cx="553.9" cy="82.3" r="1.5" fill="#222"/>
<path d="M617 111.8 L603.3 135 L613.9 149.8 L627.6 124.5 L626.6 118.1 Z"/>
<path d="M617 104 L622.5 101.2 Q624 100.8 625 102.2 L629.6 108.8 Q630.2 110.2 629.2 111.5 L625.3 116.8 Q624 117.8 622.8 116.6 L617.4 112.4 Z" stroke-width="1.7"/>
<circle cx="622.5" cy="108.8" r="1.6" fill="#222"/>
<path d="M580 179.2 L567.4 198.6 L554.9 207.7 L549.1 220.3 L553.7 228.3 L561.7 227.2 L564 218 L576.6 208.9 L589.2 191.7 Z"/>
<path d="M602.9 190.6 L608.6 207.7 L616.6 232.9 L614.3 242 L620 254.6 L629.2 252.3 L628 244.3 L623.5 239.8 L630.3 230.6 L622.3 205.5 L616.6 184.9 Z"/>
<path d="M553.5 92 L579 138.5 M566 90.5 L573.5 94 L590 133 M619.5 113.5 L606 136.5 M628 122 L615 147 M579.5 183 L567.5 201 L556.5 209.5 L551.5 220.5 M588 194 L576 210.5 L565.5 218.5 L563 226 M605.5 193 L611 210 L618.5 233.5 L616.5 242 L621 252 M615.5 188.5 L621 207 L628.5 230.5 L622.5 240" fill="none" stroke-width="3.1" stroke="#161616"/>
<path d="M560.0 97.0 l6.5 -3 M561.7 100.0 l6.5 -3 M563.4 103.0 l6.5 -3 M565.1 106.0 l6.5 -3 M566.8 109.0 l6.5 -3 M568.5 112.0 l6.5 -3 M570.2 115.0 l6.5 -3 M571.8 118.0 l6.5 -3 M573.5 121.0 l6.5 -3 M575.2 124.0 l6.5 -3 M576.9 127.0 l6.5 -3 M578.6 130.0 l6.5 -3 M580.3 133.0 l6.5 -3 M582.0 136.0 l6.5 -3 M620.5 119.0 l5 2.8 M618.6 122.3 l5 2.8 M616.7 125.7 l5 2.8 M614.8 129.0 l5 2.8 M612.8 132.3 l5 2.8 M610.9 135.7 l5 2.8 M609.0 139.0 l5 2.8 M577.0 188.0 l5.5 4 M574.7 191.1 l5.5 4 M572.3 194.2 l5.5 4 M570.0 197.3 l5.5 4 M567.7 200.4 l5.5 4 M565.3 203.6 l5.5 4 M563.0 206.7 l5.5 4 M560.7 209.8 l5.5 4 M558.3 212.9 l5.5 4 M556.0 216.0 l5.5 4 M608.5 196.0 l6 -2.2 M609.4 199.0 l6 -2.2 M610.2 202.0 l6 -2.2 M611.1 205.0 l6 -2.2 M612.0 208.0 l6 -2.2 M612.9 211.0 l6 -2.2 M613.8 214.0 l6 -2.2 M614.6 217.0 l6 -2.2 M615.5 220.0 l6 -2.2 M616.4 223.0 l6 -2.2 M617.2 226.0 l6 -2.2 M618.1 229.0 l6 -2.2 M619.0 232.0 l6 -2.2 M551 221 L559 225 M553 224.5 L560 228 M618 246 L627 248 M621 250.5 L628 251.5" fill="none" stroke-width="0.85" stroke="#222"/>
<ellipse cx="598.2" cy="163.2" rx="21.8" ry="29" transform="rotate(-19.5 598.2 163.2)" stroke-width="1.7"/>
<ellipse cx="599.3" cy="164.3" rx="17.7" ry="24.8" transform="rotate(-19.5 599.3 164.3)" stroke-width="1" fill="none"/>
<ellipse cx="597.4" cy="161.8" rx="15.1" ry="21.8" transform="rotate(-19.5 597.4 161.8)" stroke-width="1.6"/>
<path d="M603.9 144.3 L606.8 144.7 M605.3 145.6 L608.4 146.2 M606.7 147.1 L609.9 147.8 M607.9 148.6 L611.3 149.6 M609.1 150.4 L612.6 151.5 M610.1 152.2 L613.8 153.5 M611.1 154.1 L614.9 155.6 M611.9 156.0 L615.8 157.8 M612.6 158.1 L616.5 160.0 M613.1 160.1 L617.1 162.3 M613.5 162.2 L617.6 164.6 M613.8 164.3 L617.8 167.0 M613.9 166.3 L617.9 169.2 M613.8 168.3 L617.9 171.5 M613.6 170.3 L617.6 173.7 M613.3 172.2 L617.2 175.7 M612.8 173.9 L616.6 177.7 M612.1 175.6 L615.9 179.6 M611.4 177.1 L615.0 181.3 M610.4 178.5 L614.0 182.9 M609.4 179.8 L612.8 184.2 M608.3 180.8 L611.5 185.5 M607.1 181.7 L610.1 186.5 M605.7 182.5 L608.6 187.3 M604.3 183.0 L607.0 187.9 M602.9 183.3 L605.3 188.2 M601.3 183.5 L603.6 188.4 M599.8 183.4 L601.9 188.3 M598.2 183.1 L600.1 188.1 M596.6 182.7 L598.3 187.6 M595.1 182.0 L596.5 186.8 M593.5 181.2 L594.8 185.9 M592.0 180.1 L593.0 184.8 M590.5 179.0 L591.4 183.5 M587.4 180.6 L585.6 182.7 M585.5 178.3 L583.4 180.2 M583.8 175.8 L581.5 177.4 M582.3 173.1 L579.9 174.4 M581.1 170.2 L578.5 171.2 M580.1 167.3 L577.4 167.9 M579.4 164.2 L576.6 164.6 M578.9 161.2 L576.1 161.2 M578.8 158.2 L576.0 157.9 M578.9 155.3 L576.2 154.6 M579.4 152.5 L576.7 151.4 M580.1 149.8 L577.6 148.5 M581.1 147.4 L578.7 145.7 M582.3 145.2 L580.2 143.2 M618.1 174.7 L619.7 175.0 M617.2 177.8 L618.7 178.3 M616.0 180.6 L617.3 181.4 M614.5 183.0 L615.5 184.1 M612.6 185.1 L613.4 186.5 M610.5 186.8 L611.0 188.3 M608.1 188.1 L608.4 189.7 M605.6 188.8 L605.5 190.6 M602.9 189.1 L602.5 190.9 M600.1 188.9 L599.5 190.7" fill="none" stroke-width="0.9"/>
</g>
<g id="parts" fill="#fff" stroke="#1e1e1e" stroke-width="1.1" stroke-linecap="round" stroke-linejoin="round">
<ellipse cx="575.4" cy="72.4" rx="4.1" ry="5.1" transform="rotate(-20 575.4 72.4)" stroke-width="1.6"/>
<ellipse cx="575.6" cy="72.9" rx="1.3" ry="2" transform="rotate(-20 575.6 72.9)" fill="#444" stroke-width="0.6"/>
<ellipse cx="587.1" cy="68.4" rx="4.4" ry="5.2" transform="rotate(-20 587.1 68.4)" fill="#4a4a4a" stroke-width="1.7"/>
<ellipse cx="587.3" cy="67.8" rx="1.8" ry="2.4" transform="rotate(-20 587.3 67.8)" fill="#fff" stroke-width="0.7"/>
<path d="M595.4 60.6 L606 56.8 L607.6 61.6 L597 65.6 Z" fill="#555" stroke-width="1.3"/>
<path d="M596.4 63.2 L606.5 59.4" stroke="#e4e4e4" stroke-width="1" stroke-dasharray="1.2 1"/>
<path d="M604.6 55.2 L608.8 52.4 L612.4 54 L613.6 60 L610.4 64 L606.4 63.2 Z" fill="#666" stroke-width="1.5"/>
<ellipse cx="609.6" cy="57.6" rx="1.7" ry="2.6" fill="#eee" stroke-width="0.6"/>
<circle cx="130" cy="230.1" r="5.2" fill="#555" stroke-width="1.6"/>
<ellipse cx="129.6" cy="229.8" rx="2.3" ry="2.7" fill="#ddd" stroke-width="0.8"/>
<ellipse cx="231.6" cy="278.8" rx="8.3" ry="11.2" transform="rotate(-25 231.6 278.8)" stroke-width="2.6"/>
<ellipse cx="232.3" cy="279.6" rx="5.6" ry="8.2" transform="rotate(-25 232.3 279.6)" stroke-width="1.3"/>
<path d="M227 274 L232 280 L236 276 M232 280 L231 287 M221 283 L232.5 279" fill="none" stroke-width="1"/>
<ellipse cx="306.8" cy="297.6" rx="5" ry="7.3" transform="rotate(-22 306.8 297.6)" stroke-width="2.1"/>
<ellipse cx="307.4" cy="297.9" rx="2.6" ry="4.4" transform="rotate(-22 307.4 297.9)" stroke-width="1.3" fill="#999"/>
<g transform="translate(215 240) scale(0.10568)" stroke-width="10" stroke="#141414">
<path d="M480 105 L585 62 L640 72 L682 155 L650 198 L565 248 L500 268 Z" fill="#fff" stroke-width="16"/>
<path d="M520 120 L600 88 M535 160 L640 112 M550 205 L660 150 M600 70 L650 185" stroke-width="13"/>
<ellipse cx="622" cy="132" rx="17" ry="25" transform="rotate(-22 622 132)" fill="#fff" stroke-width="9"/>
<path d="M330 195 L420 150 L475 290 L372 328 Z" fill="#3a3a3a"/>
<ellipse cx="478" cy="192" rx="44" ry="86" transform="rotate(-22 478 192)" fill="#fff" stroke-width="14"/>
<ellipse cx="442" cy="206" rx="48" ry="92" transform="rotate(-22 442 206)" fill="#fff" stroke-width="15"/>
<path d="M420 150 L460 250 M440 135 L480 240" stroke-width="9"/>
<path d="M290 245 L345 220 L385 315 L325 340 Z" fill="#fff" stroke-width="10"/>
<ellipse cx="297" cy="290" rx="28" ry="42" transform="rotate(-22 297 290)" fill="#fff" stroke-width="10"/>
<path d="M350 235 L392 318 M372 222 L412 308 M345 262 L405 232 M362 298 L420 270" stroke="#ddd" stroke-width="7"/>
</g>
</g>
<g id="axes" fill="none" stroke="#2a2a2a" stroke-width="1" stroke-dasharray="17 2.5 2.5 2.5">
<path d="M154 265 L549 83"/>
<path d="M556 77.6 L572 70.5" stroke-dasharray="none"/>
<path d="M298 301.4 L302 299.6 M311.5 295.2 L320 291.2" stroke-dasharray="none" stroke-width="1.2"/>
<path d="M324 289.4 L364.6 270.6" stroke-dasharray="14 2.5 2.5 2.5"/>
<path d="M375 265.6 L425 242.4" stroke-dasharray="9 3 2 3" stroke="#555"/>
<path d="M498.5 210 L594 164.2"/>
<path d="M462.5 197 L578 146"/>
<path d="M220.3 332 L113 383" stroke-dasharray="14 2.5 2.5 2.5"/>
<path d="M220.3 285 V332" stroke-dasharray="20 2 6 2"/>
<path d="M135.5 226.5 L145.7 223.4 V267.8 L153 264.8" stroke-dasharray="12 2" stroke-width="1.25"/>
<path d="M237 275.5 L246 271.5" stroke-dasharray="none"/>
</g>
</svg>
<div id="edge"></div>
<div id="black"><div class="tab"></div><div class="re">re ...</div></div>
<div id="bottom"></div>
<div id="dlg">
  <div id="tb">
    <svg width="12" height="8" style="position:absolute;left:9px;top:10px"><path d="M1.3 1 L5.3 4.9 L9.3 1" fill="none" stroke="#d8d8d8" stroke-width="1.4"/></svg>
    <div class="t">Référence 7700756582 [Repère n° 2]</div>
  </div>
  <div class="bd"></div><div class="bb"></div>
  <div class="l" style="left:8.5px;top:27px;letter-spacing:0.5px">Libellé</div>
  <div class="l" style="left:8.5px;top:47px;letter-spacing:0.27px">Référence</div>
  <div class="l b" style="left:260px;top:47px;letter-spacing:0.14px">77 00 828 623</div>
  <div class="l" style="left:283px;top:77px;letter-spacing:0.27px">Consulter</div>
  <div class="box" style="left:215px;top:94px;width:33px;height:33px;background:#dcdcdc;border:1px solid #a4a4a4;"><span class="l" style="left:0;width:31px;top:9px;font-size:5.5px;line-height:6px;color:#c0c0c0;text-align:center;">Info<br>REACH</span></div>
  <svg style="position:absolute;left:300px;top:94px" width="33" height="33" viewBox="0 0 33 33"><rect width="33" height="33" fill="#2f2f6c"/><path d="M0.5 2.5 L23 2 L32 20 L28 29.5 L0.5 31.5 Z" fill="#e4ddd0"/><path d="M0.5 31.5 L28 29.5 L32 20 L32.5 24 L29 31.5 Z" fill="#bdb3a2"/><path d="M10.8 19 L0.5 28.6" stroke="#a89c88" stroke-width="3.2" fill="none"/><circle cx="13.6" cy="16" r="4.7" fill="#a89c88"/><path d="M14 15.8 L19.5 12.8" stroke="#e4ddd0" stroke-width="3" fill="none"/><rect x="0.5" y="0.5" width="32" height="32" fill="none" stroke="#7d9cc4" stroke-width="1"/><path d="M1 1.5 H32" stroke="#c4d4ea" stroke-width="1.4"/></svg>
  <div style="position:absolute;left:356px;top:94px;width:4px;height:33px;background:#2f2f6c;border-left:1px solid #7d9cc4;box-sizing:border-box"></div>
  <div class="l" style="left:8.5px;top:94px">Prix HT (EUR)</div>
  <div class="l b" style="left:105px;top:94px">0</div>
  <div class="l" style="left:8.5px;top:114px">CORT</div>
  <div class="l" style="left:8.5px;top:134px">Prix TTC (EUR)</div>
  <div class="l b" style="left:105px;top:134px">0</div>
  <div class="l" style="left:8.5px;top:155px;letter-spacing:0.24px">Code barème</div>
  <div class="l" style="left:211.5px;top:135px;color:#b0b0b8;text-shadow:1px 1px 0 #fafafe;letter-spacing:0.1px">REACH</div>
  <div class="l" style="left:270px;top:135px;letter-spacing:0.13px">MR/NT/Actis</div>
  <div class="l" style="left:160px;top:165px;letter-spacing:0.06px">Quantité à verser :</div>
  <div class="box" style="left:288px;top:162px;width:42px;height:20px;border:1px solid #9a9aa2;"><span class="l" style="left:3px;top:2px">1.0</span></div>
  <div class="l" style="left:5.5px;top:194px;letter-spacing:0.13px">Informations sur la pièce :</div>
  <div class="box" style="left:4px;top:212px;width:366px;height:54px;border-left:2px solid #909090;border-top:2px solid #9c9c9c;border-bottom:1px solid #f4f4f8;"><span class="l" style="left:1px;top:1px;font-size:9px;letter-spacing:0.21px;line-height:10px">Référence inconnue au fichier tarifaire; Veuillez vérifier votre saisie ou contacter votre</span></div>
  <div class="l" style="left:5.5px;top:273px;letter-spacing:0.17px">Chaîne de remplacement :</div>
  <div class="box" style="left:4px;top:295px;width:366px;height:69px;border:1px solid #999;font-size:12px;letter-spacing:-0.12px">
    <div class="l" style="left:1px;top:1.5px">7700756582</div>
    <div class="l" style="left:1px;top:14.5px">7700769131</div>
    <div class="l" style="left:1px;top:27.5px">7700728083</div>
    <div style="position:absolute;left:1px;top:40px;width:365px;height:13px;background:#3399ff"></div>
    <div class="l" style="left:1px;top:40.5px;color:#fff">*7700828623</div>
  </div>
</div>
</body>
</html>
